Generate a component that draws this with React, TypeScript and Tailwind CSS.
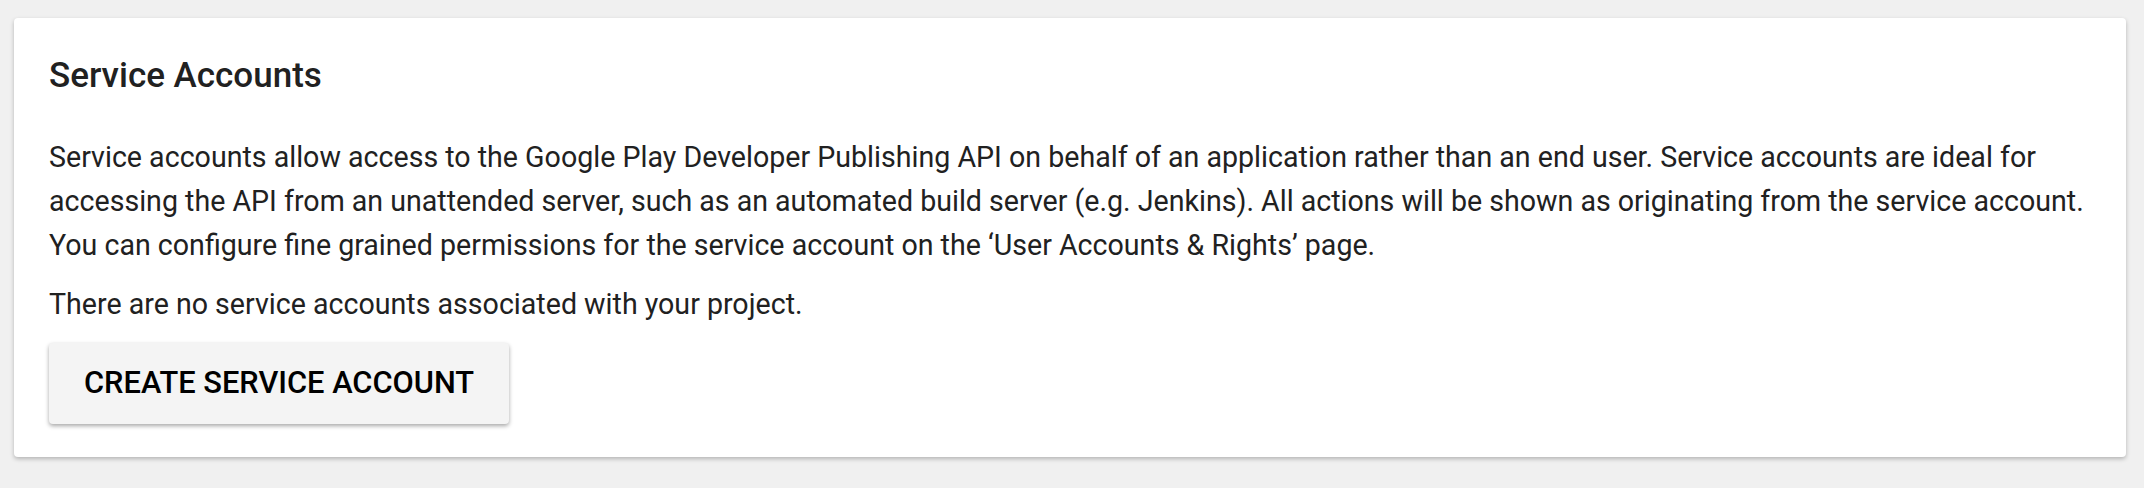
export default function App() {
  return (
    <div className="min-h-[488px] bg-[#f0f0f0] pt-[18px] pl-[14px] pr-[18px] pb-[30px] font-['Roboto',sans-serif] text-[#212121]">
      <div className="rounded-[4px] bg-white px-[35px] pt-[34px] pb-[33px] shadow-[0_2px_4px_rgba(0,0,0,0.25)]">
        <h2 className="text-[35px] leading-[48px] font-medium">Service Accounts</h2>
        <p className="mt-[35px] text-[28.6px] leading-[44px]">
          Service accounts allow access to the Google Play Developer Publishing API on behalf of an application rather
          than an end user. Service accounts are ideal for accessing the API from an unattended server, such as an
          automated build server (e.g. Jenkins). All actions will be shown as originating from the service account. You
          can configure fine grained permissions for the service account on the ‘User Accounts &amp; Rights’ page.
        </p>
        <p className="mt-[15px] text-[28.6px] leading-[44px]">There are no service accounts associated with your project.</p>
        <button className="mt-[17px] h-[81px] rounded-[4px] bg-[#f4f4f4] px-[35px] text-[30.8px] font-medium text-black shadow-[0_2px_4px_rgba(0,0,0,0.35)]">
          CREATE SERVICE ACCOUNT
        </button>
      </div>
    </div>
  );
}
